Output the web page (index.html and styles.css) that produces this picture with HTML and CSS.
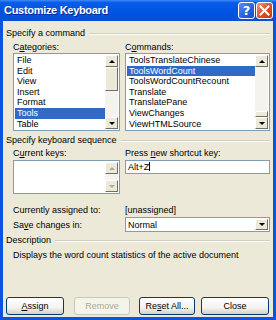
FILE: index.html
```html
<!DOCTYPE html>
<html>
    <head>
        <meta charset="utf-8">
        <title>Customize Keyboard</title>
        <link rel="stylesheet" href="styles.css">
    </head>
    <body>
        <div class="window">
            <div class="titlebar">
                <span class="title">Customize Keyboard</span>
                <span class="tbtn help">?</span>
                <span class="tbtn close">
                    <svg width="11" height="11" viewBox="0 0 11 11"><path d="M1.5 1.5 L9.5 9.5 M9.5 1.5 L1.5 9.5" stroke="#fff" stroke-width="2" stroke-linecap="square"/></svg>
                </span>
            </div>
            <div class="body">
                <div class="group g1"><span>Specify a command</span></div>
                <div class="cols">
                    <div class="col">
                        <div class="label">C<u>a</u>tegories:</div>
                        <div class="listbox">
                            <div class="items">
                                <div>File</div>
                                <div>Edit</div>
                                <div>View</div>
                                <div>Insert</div>
                                <div>Format</div>
                                <div class="sel">Tools</div>
                                <div>Table</div>
                            </div>
                            <div class="vscroll">
                                <div class="sbtn up"></div>
                                <div class="track"><div class="thumb t1"></div></div>
                                <div class="sbtn down"></div>
                            </div>
                        </div>
                    </div>
                    <div class="col right">
                        <div class="label">C<u>o</u>mmands:</div>
                        <div class="listbox">
                            <div class="items">
                                <div>ToolsTranslateChinese</div>
                                <div class="sel">ToolsWordCount</div>
                                <div>ToolsWordCountRecount</div>
                                <div>Translate</div>
                                <div>TranslatePane</div>
                                <div>ViewChanges</div>
                                <div>ViewHTMLSource</div>
                            </div>
                            <div class="vscroll">
                                <div class="sbtn up"></div>
                                <div class="track"><div class="thumb t2"></div></div>
                                <div class="sbtn down"></div>
                            </div>
                        </div>
                    </div>
                </div>

                <div class="group g2"><span>Specify keyboard sequence</span></div>
                <div class="cols">
                    <div class="col">
                        <div class="label">C<u>u</u>rrent keys:</div>
                        <div class="listbox keys">
                            <div class="items"></div>
                            <div class="vscroll off">
                                <div class="sbtn up"></div>
                                <div class="sbtn down"></div>
                            </div>
                        </div>
                    </div>
                    <div class="col right">
                        <div class="label">Press <u>n</u>ew shortcut key:</div>
                        <div class="textbox">Alt+Z<span class="caret"></span></div>
                    </div>
                </div>

                <div class="row assigned">
                    <div class="col">Currently assigned to:</div>
                    <div class="col right">[unassigned]</div>
                </div>
                <div class="row save">
                    <div class="col">Sa<u>v</u>e changes in:</div>
                    <div class="col right">
                        <div class="combo"><span>Normal</span><div class="sbtn down"></div></div>
                    </div>
                </div>

                <div class="group g3"><span>Description</span></div>
                <div class="desc">Displays the word count statistics of the active document</div>

                <div class="buttons">
                    <div class="btn b-assign"><u>A</u>ssign</div>
                    <div class="btn b-remove disabled">Remove</div>
                    <div class="btn b-reset">Re<u>s</u>et All...</div>
                    <div class="btn b-close">Close</div>
                </div>
            </div>
        </div>
    </body>
</html>
```

FILE: styles.css
```css
*{box-sizing:border-box;}
body,html{
    margin: 0;
    width:100%;
    height:100%;
}
body {background-color: #fff; font-family: "Liberation Sans", Arial, sans-serif; font-size: 9px; color: #000;}
u{text-decoration-thickness:1px; text-underline-offset:1px;}

.window{
    width: 276px;
    height: 320px;
    display: flex;
    flex-direction: column;
    background: #0a54e0;
    padding: 0 3px 3px 3px;
}
.titlebar{
    height: 21px;
    margin: 0 -3px;
    display: flex;
    align-items: flex-start;
    padding: 2px 3px 0 4px;
    background: linear-gradient(#3d8cf7 0%, #0a5ce8 12%, #0256e4 45%, #0052e0 70%, #0a4fd6 100%);
}
.title{
    flex: 1;
    color: #fff;
    font-family: "Liberation Sans", Arial, sans-serif;
    font-weight: bold;
    font-size: 11px;
    line-height: 17px;
    text-shadow: 1px 1px 0 #0a2a8c;
    letter-spacing: -0.3px;
}
.tbtn{
    width: 17px;
    height: 17px;
    border: 1px solid #fff;
    border-radius: 3px;
    display: flex;
    align-items: center;
    justify-content: center;
    color: #fff;
    font: bold 13px "DejaVu Sans", sans-serif;
}
.help{background: linear-gradient(135deg, #5a8ef4, #2460e0 60%, #1a4fc8); margin-right: 1px;}
.close{background: linear-gradient(135deg, #f09a7c, #e0502a 50%, #c33c14);}

.body{
    flex: 1;
    background: #ece9d8;
    padding: 7px 3px 0 3px;
    display: flex;
    flex-direction: column;
}
.group{
    display: flex;
    align-items: center;
    gap: 4px;
    height: 11px;
    line-height: 11px;
    color: #000;
}
.group::after{
    content: "";
    flex: 1;
    border-top: 1px solid #d0d0bf;
    border-bottom: 1px solid #fff;
}
.g2{margin-top: 4px;}
.g3{margin-top: 3px;}

.cols, .row{
    display: flex;
    gap: 5px;
    padding-left: 7px;
}
.col{width: 107px;}
.col.right{width: 145px;}
.label{height: 11px; line-height: 11px; margin-top: 3px;}
.g2 + .cols .label{margin-top: 2px; margin-bottom: 1px;}

.listbox{
    height: 78px;
    background: #fff;
    border: 1px solid #7f9db9;
    display: flex;
    padding: 1px;
}
.items{flex: 1; line-height: 10.6px; overflow: hidden;}
.items div{padding-left: 2px; height: 10.6px; white-space: nowrap;}
.items .sel{background: #316ac5; color: #fff;}

.vscroll{
    width: 13px;
    display: flex;
    flex-direction: column;
}
.track{
    flex: 1;
    background: #f4f3ee;
    display: flex;
    flex-direction: column;
}
.thumb{
    background: #ece9d8;
    border: 1px solid;
    border-color: #fff #716f64 #716f64 #fff;
}
.t1{height: 24px;}
.t2{height: 6px; margin-top: auto;}
.sbtn{
    height: 12px;
    width: 13px;
    background: #ece9d8;
    border: 1px solid;
    border-color: #fff #716f64 #716f64 #fff;
    display: flex;
    align-items: center;
    justify-content: center;
}
.sbtn::after{
    content: "";
    border-left: 3px solid transparent;
    border-right: 3px solid transparent;
}
.up::after{border-bottom: 3px solid #000;}
.down::after{border-top: 3px solid #000;}
.off .up::after{border-bottom-color: #aca899;}
.off .down::after{border-top-color: #aca899;}
.vscroll.off{justify-content: space-between; background: #f4f3ee;}

.listbox.keys{height: 34px;}
.textbox{
    height: 14px;
    background: #fff;
    border: 1px solid #7f9db9;
    padding-left: 2px;
    line-height: 12px;
}
.caret{display: inline-block; width: 1px; height: 9px; background: #000; vertical-align: -1px;}

.row{align-items: center; height: 11px;}
.assigned{margin-top: 10px;}
.save{margin-top: 2px; height: 15px;}
.combo{
    height: 15px;
    background: #fff;
    border: 1px solid #7f9db9;
    display: flex;
    align-items: center;
    padding: 1px 1px 1px 2px;
}
.combo span{flex: 1;}
.combo .sbtn{height: 11px;}

.desc{padding-left: 7px; margin-top: 4px; line-height: 11px;}

.buttons{
    margin-top: auto;
    margin-bottom: 2px;
    display: flex;
    gap: 10px;
}
.btn{
    height: 18px;
    width: 58px;
    border: 1px solid #003c74;
    border-radius: 3px;
    background: linear-gradient(#fff, #f4f3ee 60%, #d6d0c5);
    display: flex;
    align-items: center;
    justify-content: center;
}
.b-remove{width: 56px;}
.b-reset{width: 56px; margin-left: -1px;}
.b-close{width: 68px; margin-left: -4px;}
.btn.disabled{border-color: #c9c7ba; background: #f5f4ea; color: #aca899;}
```
